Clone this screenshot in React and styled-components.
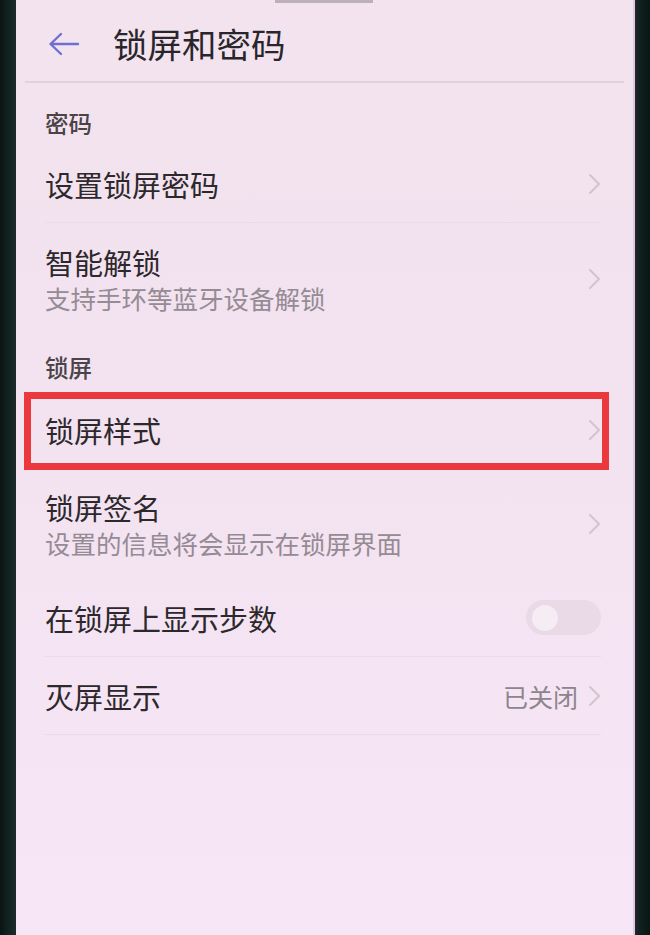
import React from "react";
import styled, { createGlobalStyle } from "styled-components";

const GlobalStyle = createGlobalStyle`
  html, body {
    margin: 0;
    padding: 0;
    background: #0c1917;
  }
  * {
    box-sizing: border-box;
  }
`;

const Phone = styled.div`
  display: flex;
  width: 650px;
  height: 935px;
  overflow: hidden;
  font-family: "Noto Sans CJK SC", "Noto Sans", sans-serif;
`;

const Bezel = styled.div`
  flex: 0 0 ${(p) => p.$width}px;
  background: linear-gradient(
    90deg,
    ${(p) => (p.$side === "left" ? "#0a1413, #142725 70%, #1d2a2c" : "#2a2230, #102220 25%, #0a1614")}
  );
`;

const Screen = styled.div`
  position: relative;
  flex: 1;
  display: flex;
  flex-direction: column;
  background: linear-gradient(180deg, #f2e3ee 0%, #f3e2f0 50%, #f7e6f6 100%);
  border-right: 2px solid #dccbe0;
`;

const Notch = styled.div`
  position: absolute;
  top: 0;
  left: 259px;
  width: 98px;
  height: 3px;
  background: #bcb0ba;
`;

const Header = styled.div`
  display: flex;
  align-items: center;
  gap: 33px;
  height: 81px;
  padding: 6px 0 0 32px;
`;

const Title = styled.h1`
  margin: 0;
  font-size: 34.5px;
  line-height: 1;
  font-weight: 400;
  color: #29262b;
`;

const HeaderLine = styled.div`
  height: 2px;
  margin: 0 9px;
  background: #e2d2de;
`;

const SectionTitle = styled.div`
  height: ${(p) => p.$height}px;
  padding: ${(p) => p.$top}px 0 0 29px;
  font-size: 23.5px;
  line-height: 24px;
  font-weight: 500;
  color: #4a4449;
`;

const Row = styled.div`
  position: relative;
  display: flex;
  align-items: center;
  height: ${(p) => p.$height}px;
  margin: 0 32px 0 29px;
  border-bottom: 1px solid ${(p) => (p.$line ? "#eadbe8" : "transparent")};
`;

const RowText = styled.div`
  flex: 1;
  display: flex;
  flex-direction: column;
  gap: 4px;
`;

const Label = styled.div`
  font-size: 29px;
  line-height: 34px;
  color: #2c282b;
`;

const Hint = styled.div`
  font-size: 25.5px;
  line-height: 30px;
  color: #958b94;
`;

const Value = styled.span`
  font-size: 25px;
  color: #8e848d;
  margin-right: 10px;
`;

const Highlight = styled.div`
  position: absolute;
  top: 0;
  bottom: -2px;
  left: -21px;
  right: -8px;
  border: 7px solid #ea383d;
  pointer-events: none;
`;

const Toggle = styled.div`
  display: flex;
  align-items: center;
  width: 75px;
  height: 35px;
  padding-left: 6px;
  border-radius: 18px;
  background: #ead9e6;
`;

const Knob = styled.div`
  width: 26px;
  height: 26px;
  border-radius: 50%;
  background: #f6ecf4;
`;

const BackArrow = () => (
  <svg width="32" height="24" viewBox="0 0 32 24" fill="none">
    <path
      d="M30 12H3M13 2L2.5 12L13 22"
      stroke="#6e6fd2"
      strokeWidth="2.4"
      strokeLinecap="round"
      strokeLinejoin="round"
    />
  </svg>
);

const Chevron = () => (
  <svg width="13" height="22" viewBox="0 0 13 22" fill="none">
    <path
      d="M2 2L11 11L2 20"
      stroke="#d1c4cf"
      strokeWidth="2"
      strokeLinecap="round"
      strokeLinejoin="round"
    />
  </svg>
);

const App = () => {
  return (
    <>
      <GlobalStyle />
      <Phone>
        <Bezel $side="left" $width={16} />
        <Screen>
          <Notch />
          <Header>
            <BackArrow />
            <Title>锁屏和密码</Title>
          </Header>
          <HeaderLine />

          <SectionTitle $height={63} $top={28}>
            密码
          </SectionTitle>
          <Row $height={77} $line>
            <RowText>
              <Label>设置锁屏密码</Label>
            </RowText>
            <Chevron />
          </Row>
          <Row $height={113}>
            <RowText>
              <Label>智能解锁</Label>
              <Hint>支持手环等蓝牙设备解锁</Hint>
            </RowText>
            <Chevron />
          </Row>

          <SectionTitle $height={56} $top={19}>
            锁屏
          </SectionTitle>
          <Row $height={77}>
            <RowText>
              <Label>锁屏样式</Label>
            </RowText>
            <Chevron />
            <Highlight />
          </Row>
          <Row $height={110}>
            <RowText>
              <Label>锁屏签名</Label>
              <Hint>设置的信息将会显示在锁屏界面</Hint>
            </RowText>
            <Chevron />
          </Row>
          <Row $height={78} $line>
            <RowText>
              <Label>在锁屏上显示步数</Label>
            </RowText>
            <Toggle>
              <Knob />
            </Toggle>
          </Row>
          <Row $height={78} $line>
            <RowText>
              <Label>灭屏显示</Label>
            </RowText>
            <Value>已关闭</Value>
            <Chevron />
          </Row>
        </Screen>
        <Bezel $side="right" $width={15} />
      </Phone>
    </>
  );
};

export default App;
